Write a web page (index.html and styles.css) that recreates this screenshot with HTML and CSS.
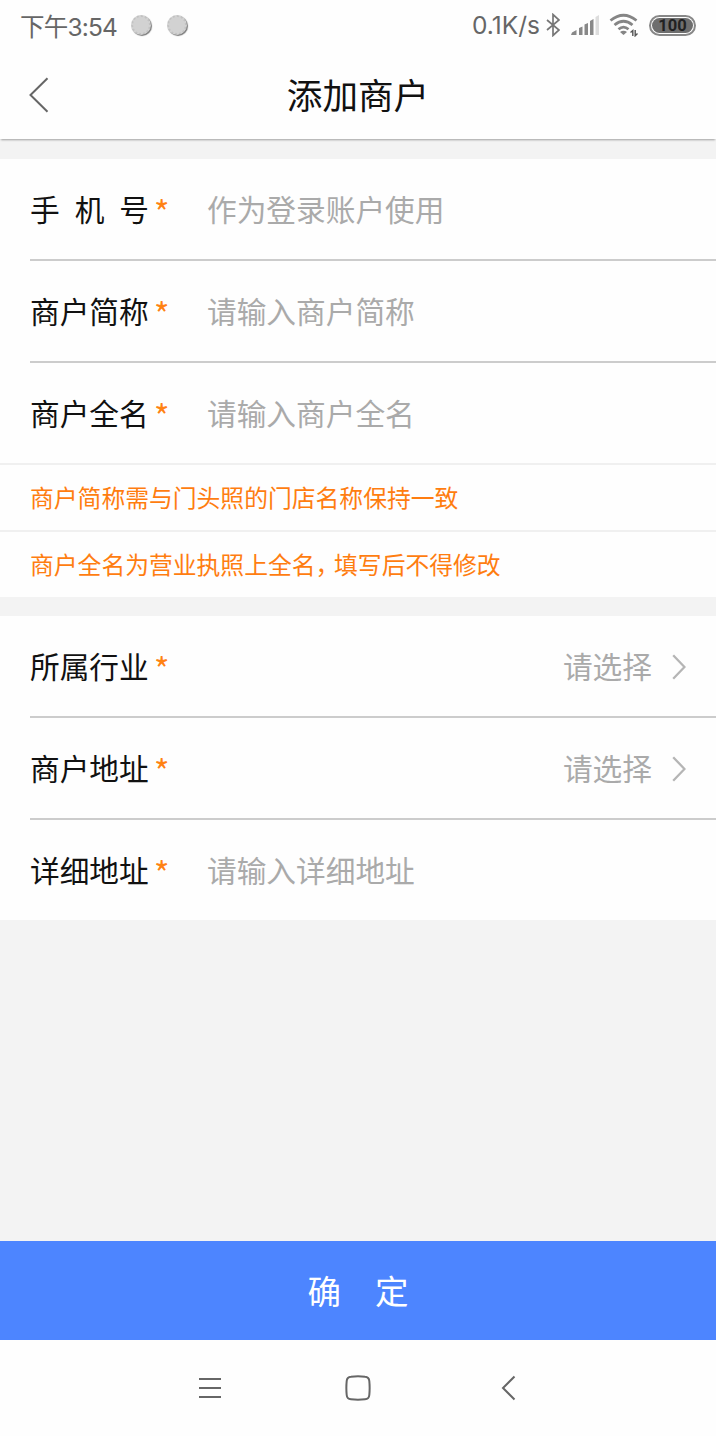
FILE: index.html
```html
<!DOCTYPE html>
<html lang="zh-CN">
<head>
    <meta charset="UTF-8">
    <title>添加商户</title>
    <link rel="stylesheet" href="styles.css">
</head>
<body>
    <div class="status-bar">
        <span class="time">下午3:54</span>
        <span class="coin"></span>
        <span class="coin"></span>
        <span class="speed">0.1K/s</span>
        <svg class="bluetooth" width="14" height="24" viewBox="0 0 14 24">
            <path d="M1 7 L13 17 L7 22.5 V1.5 L13 7 L1 17" />
        </svg>
        <svg class="signal" width="28" height="20" viewBox="0 0 28 20">
            <path d="M0 20 L1 17.5 L5.5 15 V20 Z M8 13 L11.5 11.5 V20 H8 Z M13.5 9.5 L17 8 V20 H13.5 Z M19 6 L22.5 4 V20 H19 Z" />
            <path class="weak" d="M24.5 2 L28 0 V20 H24.5 Z" />
        </svg>
        <svg class="wifi" width="30" height="24" viewBox="0 0 30 24">
            <path d="M1.5 7.5 Q14.5 -3 27.5 7.5" />
            <path d="M5.5 12 Q14.5 4.5 23.5 12" />
            <path d="M9.5 16.3 Q14.5 12 19.5 16.3" />
            <path class="dot" d="M11 19 Q14.5 16.5 18 19 L14.5 22 Z" />
            <path class="arrows" d="M23.8 23 V17.5 L21.5 19.5 M26.2 17 V22.8 L28.5 20.5" />
        </svg>
        <span class="battery"><span class="level">100</span></span>
    </div>

    <div class="header">
        <svg class="back" width="20" height="36" viewBox="0 0 20 36">
            <path d="M18.5 1.2 L1.5 18 L18.5 34.8" />
        </svg>
        <h1>添加商户</h1>
    </div>

    <form class="content" id="merchantForm">
        <div class="group">
            <div class="row">
                <label class="spread" for="phone">手 机 号</label>
                <span class="star">*</span>
                <input type="tel" id="phone" placeholder="作为登录账户使用">
            </div>
            <div class="row">
                <label for="shortName">商户简称</label>
                <span class="star">*</span>
                <input type="text" id="shortName" placeholder="请输入商户简称">
            </div>
            <div class="row last">
                <label for="fullName">商户全名</label>
                <span class="star">*</span>
                <input type="text" id="fullName" placeholder="请输入商户全名">
            </div>
            <p class="tip">商户简称需与门头照的门店名称保持一致</p>
            <p class="tip">商户全名为营业执照上全名<span class="comma">，</span>填写后不得修改</p>
        </div>

        <div class="group">
            <div class="row">
                <label>所属行业</label>
                <span class="star">*</span>
                <span class="choose">请选择</span>
                <svg class="arrow" width="14" height="26" viewBox="0 0 14 26">
                    <path d="M1.2 1.2 L12.5 13 L1.2 24.8" />
                </svg>
            </div>
            <div class="row">
                <label>商户地址</label>
                <span class="star">*</span>
                <span class="choose">请选择</span>
                <svg class="arrow" width="14" height="26" viewBox="0 0 14 26">
                    <path d="M1.2 1.2 L12.5 13 L1.2 24.8" />
                </svg>
            </div>
            <div class="row last">
                <label for="address">详细地址</label>
                <span class="star">*</span>
                <input type="text" id="address" placeholder="请输入详细地址">
            </div>
        </div>
    </form>

    <button type="submit" form="merchantForm" class="btn"><span>确</span><span>定</span></button>

    <div class="nav-bar">
        <svg width="26" height="26" viewBox="0 0 26 26">
            <path d="M2 4 H24 M2 13 H24 M2 22 H24" />
        </svg>
        <svg width="26" height="26" viewBox="0 0 26 26">
            <path d="M6 1.7 Q13 1 20 1.7 Q24 2 24.3 6 Q25 13 24.3 20 Q24 24 20 24.3 Q13 25 6 24.3 Q2 24 1.7 20 Q1 13 1.7 6 Q2 2 6 1.7 Z" />
        </svg>
        <svg width="26" height="26" viewBox="0 0 26 26">
            <path d="M21.5 1.5 L10 13 L21.5 24.5" />
        </svg>
    </div>
</body>
</html>
```

FILE: styles.css
```css
* {
    box-sizing: border-box;
}

body {
    margin: 0;
    height: 1436px;
    display: flex;
    flex-direction: column;
    background: #fefefe;
    font-family: "Noto Sans CJK SC", sans-serif;
    color: #111;
}

svg {
    display: block;
    flex: none;
    fill: none;
    stroke: #666;
    stroke-width: 2;
}

/* status bar */
.status-bar {
    display: flex;
    align-items: center;
    height: 51px;
    padding: 0 20px 1px 20px;
    font-family: Inter, "Noto Sans CJK SC", sans-serif;
    font-size: 24.5px;
    color: #666;
}

.time {
    width: 111px;
    letter-spacing: -0.8px;
    white-space: nowrap;
}

.coin {
    width: 20px;
    height: 20px;
    margin: 0 16px 1px 0;
    border-radius: 50%;
    background: #d2d2d2;
    border: 2px dotted #c2c2c2;
    box-shadow: 1px 1px 1px #777;
}

.speed {
    margin-left: auto;
    margin-right: 6px;
}

.bluetooth {
    stroke-width: 1.7;
    stroke: #777;
}

.signal {
    margin-left: 11px;
    fill: #888;
    stroke: none;
}

.signal .weak {
    fill: #ddd;
}

.wifi {
    margin-left: 10px;
    stroke: #858585;
    stroke-width: 2.8;
}

.wifi .dot {
    fill: #858585;
    stroke: none;
}

.wifi .arrows {
    stroke: #555;
    stroke-width: 1.4;
}

.battery {
    width: 47px;
    height: 21px;
    margin-left: 10px;
    padding: 1px;
    border: 2px solid #888;
    border-radius: 11px;
}

.level {
    display: block;
    height: 15px;
    border-radius: 8px;
    background: #6e6e6e;
    color: #222;
    font-family: Roboto, sans-serif;
    font-size: 16.5px;
    font-weight: bold;
    line-height: 15px;
    text-align: center;
}

/* title bar */
.header {
    position: relative;
    z-index: 1;
    display: flex;
    align-items: center;
    height: 88px;
    padding: 0 29px;
    background: #fefefe;
    box-shadow: 0 2px 2px -1px rgba(0, 0, 0, 0.35);
}

.header h1 {
    flex: 1;
    margin: 0 20px 2px 0;
    font-size: 35.6px;
    font-weight: normal;
    line-height: 50px;
    text-align: center;
}

/* form */
.content {
    flex: 1;
    padding-top: 1px;
    background: #f3f3f3;
}

.group {
    margin-top: 19px;
    background: #fefefe;
}

.row {
    display: flex;
    align-items: center;
    height: 102px;
    margin-left: 30px;
    padding-right: 30px;
    padding-bottom: 2px;
    border-bottom: 2px solid #ccc;
    font-size: 29.7px;
}

.row.last {
    height: 100px;
    border-bottom: none;
}

.row label {
    width: 119px;
    white-space: nowrap;
}

.row .spread {
    word-spacing: 8.3px;
}

.star {
    width: 58px;
    padding: 5px 0 0 5px;
    color: #ff8212;
    font-size: 33px;
    line-height: 36px;
}

.row input {
    flex: 1;
    min-width: 0;
    padding: 0;
    border: none;
    outline: none;
    background: none;
    font: inherit;
}

.row input::placeholder {
    color: #aaa;
}

.choose {
    margin-left: auto;
    margin-right: 20px;
    color: #aaa;
}

.arrow {
    margin-top: 3px;
    stroke: #b5b5b5;
    stroke-width: 2.3;
}

.tip {
    height: 67px;
    margin: 0;
    padding-left: 30px;
    border-top: 2px solid #f0f0f0;
    color: #ff7d10;
    font-size: 23.8px;
    line-height: 64px;
}

.comma {
    letter-spacing: -5.3px;
}

/* bottom */
.btn {
    display: flex;
    justify-content: center;
    align-items: center;
    gap: 34px;
    height: 99px;
    padding: 0 0 2px;
    border: none;
    background: #4d85ff;
    color: #fff;
    font-family: inherit;
    font-size: 33.5px;
    cursor: pointer;
}

.nav-bar {
    display: flex;
    justify-content: center;
    align-items: center;
    gap: 122px;
    height: 96px;
}
```
